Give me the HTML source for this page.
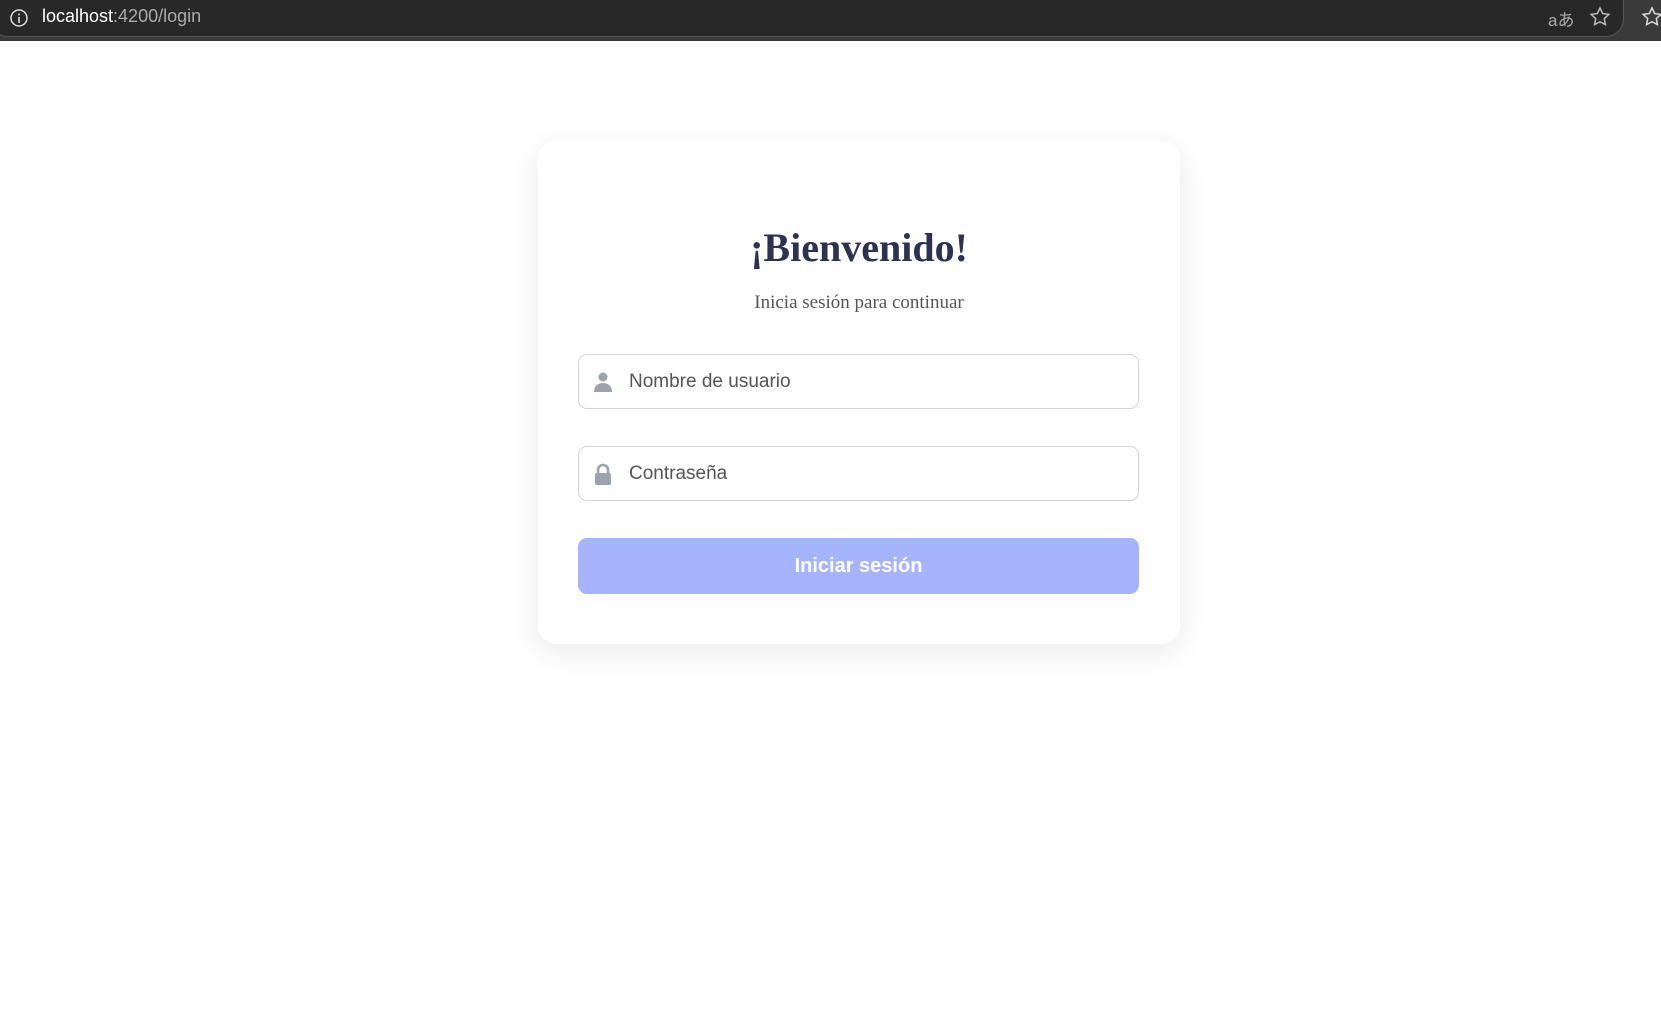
<!DOCTYPE html>
<html><head><style>
html,body{margin:0;padding:0;width:1661px;height:1013px;background:#fff;overflow:hidden;font-family:"Liberation Sans",sans-serif}
.bar{position:absolute;left:0;top:0;width:1661px;height:41px;background:#3a3a3a}
.omni{position:absolute;left:-10px;top:0;width:1632px;height:36px;background:#282828;border-radius:0 0 18px 18px;border:1px solid #555;border-top:none}
.url{position:absolute;left:42px;top:6px;font-size:18px;color:#fff}
.url span{color:#aaa}
.card{position:absolute;left:538px;top:141px;width:642px;height:503px;background:#fff;border-radius:18px;box-shadow:0 8px 30px rgba(0,0,0,.09)}
h1{position:absolute;left:0;width:642px;top:224px;margin:0;text-align:center;font-family:"Liberation Serif",serif;font-size:40px;font-weight:bold;color:#2d3250}
.sub{position:absolute;left:0;width:642px;top:292px;text-align:center;font-family:"Liberation Serif",serif;font-size:19px;color:#555}
.inp{position:absolute;left:578px;width:561px;height:55px;border:1px solid #d4d4d8;border-radius:9px;box-sizing:border-box}
.inp .t{position:absolute;left:50px;top:16px;font-size:19px;color:#555}
.inp svg{position:absolute;left:13px;top:16px}
.btn{position:absolute;left:578px;top:538px;width:561px;height:56px;background:#a5b4fc;border-radius:9px;color:#fff;font-weight:bold;font-size:20px;text-align:center;line-height:56px}
</style></head><body>
<div class="bar"><div class="omni"></div>
<svg style="position:absolute;left:9px;top:8px" width="20" height="20"><circle cx="10" cy="10" r="8" fill="none" stroke="#ddd" stroke-width="1.5"/><rect x="9.2" y="9" width="1.6" height="6" fill="#ddd"/><rect x="9.2" y="5.5" width="1.6" height="1.8" fill="#ddd"/></svg>
<div class="url">localhost<span>:4200/login</span></div>
<div style="position:absolute;left:1548px;top:6px;color:#aaa;font-size:17px">aあ</div>
<svg style="position:absolute;left:1588px;top:5px" width="24" height="24"><path d="M12 3l2.7 5.6 6.1.8-4.5 4.2 1.1 6-5.4-2.9-5.4 2.9 1.1-6-4.5-4.2 6.1-.8z" fill="none" stroke="#bbb" stroke-width="1.5"/></svg>
<svg style="position:absolute;left:1640px;top:5px" width="24" height="24"><path d="M12 3l2.7 5.6 6.1.8-4.5 4.2 1.1 6-5.4-2.9-5.4 2.9 1.1-6-4.5-4.2 6.1-.8z" fill="none" stroke="#ddd" stroke-width="1.5"/></svg>
</div>
<div class="card"></div>
<h1 style="left:538px">¡Bienvenido!</h1>
<div class="sub" style="left:538px">Inicia sesión para continuar</div>
<div class="inp" style="top:354px"><svg width="22" height="22"><circle cx="11" cy="6" r="4.5" fill="#9ca3af"/><path d="M2 21c0-6 4-9 9-9s9 3 9 9z" fill="#9ca3af"/></svg><div class="t">Nombre de usuario</div></div>
<div class="inp" style="top:446px"><svg width="22" height="24"><path d="M6 11V7a5 5 0 0 1 10 0v4" fill="none" stroke="#9ca3af" stroke-width="2.6"/><rect x="3" y="10" width="16" height="12" rx="2" fill="#9ca3af"/></svg><div class="t">Contraseña</div></div>
<div class="btn">Iniciar sesión</div>
</body></html>
